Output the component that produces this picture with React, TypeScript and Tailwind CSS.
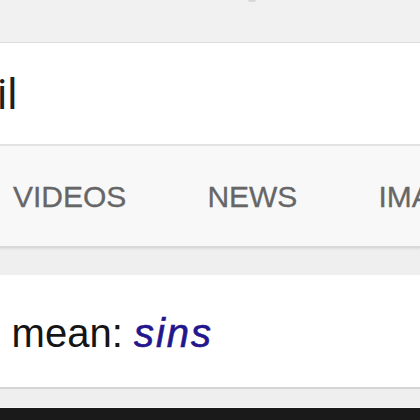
export default function App() {
  return (
    <div className="w-[420px] h-[420px] overflow-hidden bg-[#efefef] flex flex-col">
      {/* browser chrome strip */}
      <div className="relative h-[43px] shrink-0 bg-[#f1f1f1] border-b border-[#dcdcdc]">
        <div className="absolute left-[248px] top-0 w-[8px] h-[2px] rounded-b bg-[#d8d8d8]" />
      </div>

      {/* search input */}
      <div className="h-[101px] shrink-0 bg-white flex items-center pt-[3px] overflow-hidden">
        <span className="-ml-[3px] text-[42px] leading-[42px] text-[#1f1f1f] font-['Roboto',sans-serif] whitespace-nowrap">
          il
        </span>
      </div>

      {/* tabs */}
      <div className="h-[104px] shrink-0 bg-[#f8f8f8] border-t-2 border-b-2 border-t-[#e2e2e2] border-b-[#d9d9d9] shadow-[0_1px_2px_rgba(0,0,0,0.08)] flex items-center gap-[81px] pl-[13px] pt-[2px] overflow-hidden whitespace-nowrap">
        {['VIDEOS', 'NEWS', 'IMAGES'].map(tab => (
          <span
            key={tab}
            className="text-[30px] leading-[30px] text-[#666666] font-['Liberation_Sans',Arial,sans-serif] [-webkit-text-stroke:0.3px_#666666]"
          >
            {tab}
          </span>
        ))}
      </div>

      <div className="h-[27px] shrink-0" />

      {/* did you mean card */}
      <div className="h-[114px] shrink-0 bg-white border-b-2 border-[#d4d4d4] flex items-center pt-[4px] overflow-hidden">
        <p className="-ml-[64px] text-[40px] leading-[40px] text-[#151515] font-['Liberation_Sans',Arial,sans-serif] whitespace-nowrap">
          you mean:{' '}
          <i className="text-[#24168c] tracking-[2px] [-webkit-text-stroke:0.6px_#24168c]">sins</i>
        </p>
      </div>

      <div className="h-[19px] shrink-0 border-b border-[#f7f7f7]" />
      <div className="flex-1 bg-[#1a1a1a]" />
    </div>
  )
}
